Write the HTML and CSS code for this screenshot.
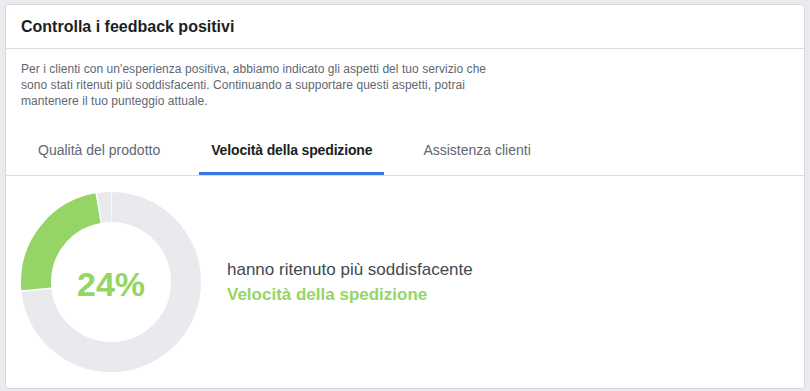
FILE: index.html
```html
<!DOCTYPE html>
<html lang="it">
<head>
  <meta charset="UTF-8" />
  <meta name="viewport" content="width=device-width, initial-scale=1.0"/>
  <title>Controlla i feedback positivi</title>
  <link rel="stylesheet" href="styles.css">
</head>
<body>
  <div class="card">
    <div class="card-header">Controlla i feedback positivi</div>
    <div class="card-body">
      <p class="intro">Per i clienti con un'esperienza positiva, abbiamo indicato gli aspetti del tuo servizio che sono stati ritenuti più soddisfacenti. Continuando a supportare questi aspetti, potrai mantenere il tuo punteggio attuale.</p>
      <div class="tabs">
        <div class="tab">Qualità del prodotto</div>
        <div class="tab active">Velocità della spedizione</div>
        <div class="tab">Assistenza clienti</div>
      </div>
    </div>
    <div class="result">
      <div class="donut">
        <!-- r=75, circonferenza 471.24; parte da ore 12 in senso orario -->
        <svg width="180" height="180" viewBox="0 0 180 180">
          <g transform="rotate(-90 90 90)" fill="none" stroke-width="30">
            <circle cx="90" cy="90" r="75" stroke="#e9eaee" stroke-dasharray="343.55 471.24" stroke-dashoffset="-0.75"/>
            <circle cx="90" cy="90" r="75" stroke="#95d565" stroke-dasharray="111.6 471.24" stroke-dashoffset="-345.8"/>
            <circle cx="90" cy="90" r="75" stroke="#e9eaee" stroke-dasharray="11.6 471.24" stroke-dashoffset="-458.9"/>
          </g>
        </svg>
        <div class="donut-value">24%</div>
      </div>
      <div class="result-text">
        <div>hanno ritenuto più soddisfacente</div>
        <div class="highlight">Velocità della spedizione</div>
      </div>
    </div>
  </div>
</body>
</html>
```

FILE: styles.css
```css
* { margin: 0; padding: 0; box-sizing: border-box; }
body {
  background-color: #e9ebee;
  font-family: "Liberation Sans", Arial, sans-serif;
  padding: 4px 5px 2px 5px;
}

.card {
  background: #fff;
  border: 1px solid #d6d9de;
  border-radius: 4px;
  height: 385px;
  display: flex;
  flex-direction: column;
}

.card-header {
  height: 44px;
  line-height: 44px;
  padding: 0 15px;
  font-size: 16px;
  font-weight: bold;
  color: #1c1e21;
  border-bottom: 1px solid #dadde1;
}

.card-body {
  padding: 12px 15px 0 15px;
  border-bottom: 1px solid #dadde1;
}

.intro {
  font-size: 12px;
  line-height: 16px;
  color: #606770;
  max-width: 480px;
  letter-spacing: 0.05px;
}

.tabs {
  display: flex;
  gap: 27px;
  margin-top: 18px;
  padding-left: 5px;
}

.tab {
  height: 48px;
  line-height: 46px;
  padding: 0 12px;
  font-size: 14px;
  color: #606770;
  border-bottom: 3px solid transparent;
}

.tab.active {
  color: #1c1e21;
  font-weight: bold;
  letter-spacing: -0.15px;
  border-bottom-color: #3578e5;
}

.result {
  flex: 1;
  display: flex;
  align-items: center;
  gap: 26px;
  padding: 0 15px;
}

.donut {
  position: relative;
  width: 180px;
  height: 180px;
}

.donut svg { display: block; }

.donut-value {
  position: absolute;
  inset: 0;
  display: flex;
  align-items: center;
  justify-content: center;
  font-size: 34px;
  font-weight: bold;
  color: #95d565;
  padding-top: 4px;
}

.result-text {
  font-size: 17px;
  line-height: 25px;
  color: #444950;
}

.result-text .highlight {
  color: #95d565;
  font-weight: bold;
}
```
